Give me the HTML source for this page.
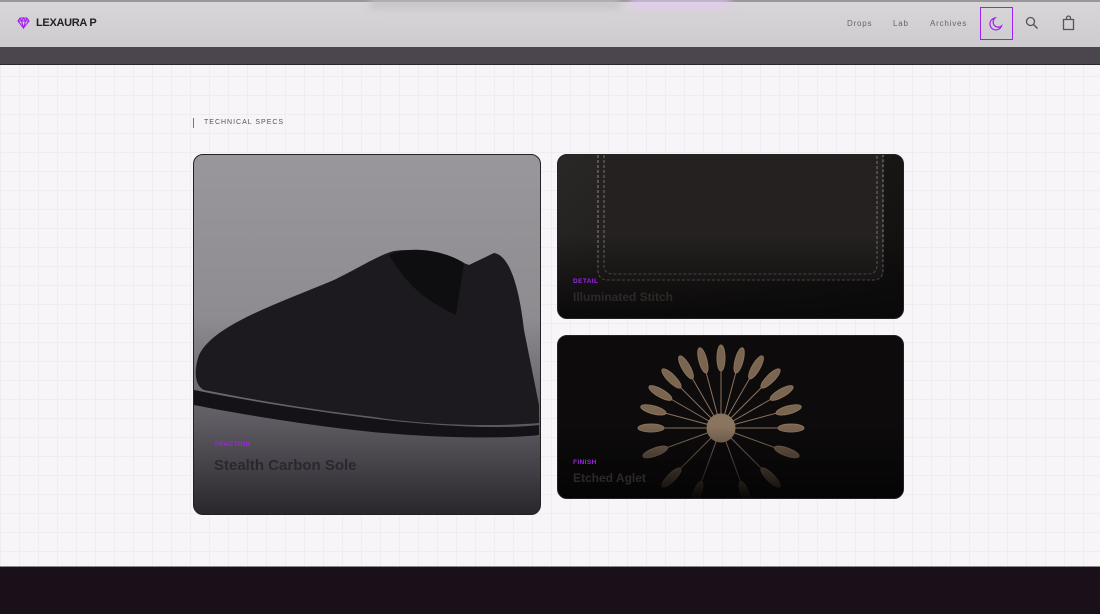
<!DOCTYPE html>
<html><head><meta charset="utf-8"><style>
*{margin:0;padding:0;box-sizing:border-box}
body{width:1100px;height:614px;overflow:hidden;background:#f8f5f9;font-family:"Liberation Sans",sans-serif;position:relative;
background-image:linear-gradient(#f1ebf2 1px,transparent 1px),linear-gradient(90deg,#f1ebf2 1px,transparent 1px);background-size:19px 19px}
.hdr{position:absolute;left:0;top:0;width:1100px;height:47px;background:linear-gradient(#d8d6d9,#cdcbce);border-top:2px solid #9a979b}
.band{position:absolute;left:0;top:47px;width:1100px;height:18px;background:#4b464d;border-bottom:1px solid #2a262b}
.logo{position:absolute;left:17px;top:17px;display:flex;align-items:center;gap:6px;font-size:11px;font-weight:bold;color:#222;letter-spacing:-.3px}
.nav{position:absolute;top:19px;font-size:8px;color:#666;letter-spacing:.8px}
.moon{position:absolute;left:980px;top:7px;width:33px;height:33px;border:1.5px solid #a020f0}
.lbl{position:absolute;left:193px;top:118px;border-left:1.5px solid #a34be0;padding-left:10px;font-size:7px;letter-spacing:1px;color:#555;height:10px;line-height:10px}
.card{position:absolute;border-radius:10px;overflow:hidden;border:1px solid #222}
.tag{position:absolute;font-size:6.5px;font-weight:bold;color:#a020f0;letter-spacing:.4px}
.ttl{position:absolute;font-weight:bold;color:#2a2730}
.foot{position:absolute;left:0;top:566px;width:1100px;height:48px;background:#1a1019;border-top:1px solid #888}
</style></head><body>
<div class="hdr"></div>
<div style="position:absolute;left:370px;top:0;width:250px;height:8px;background:#c3c1c4;filter:blur(4px)"></div>
<div style="position:absolute;left:630px;top:0;width:100px;height:8px;background:#e3c9ee;filter:blur(4px)"></div>
<div class="band"></div>
<div class="logo"><svg width="13" height="12" viewBox="0 0 13 12"><path d="M3 1h7l2 3-5.5 7L1 4z M1 4h11 M4.5 4l2 7 2-7 M3 1l1.5 3 2-3 2 3 1.5-3" fill="none" stroke="#a020f0" stroke-width="1.1"/></svg>LEXAURA P</div>
<div class="nav" style="left:847px">Drops</div>
<div class="nav" style="left:893px">Lab</div>
<div class="nav" style="left:930px">Archives</div>
<div class="moon"><svg width="30" height="30" viewBox="0 0 30 30"><path d="M14 10a6 6 0 1 0 6.5 8A5 5 0 0 1 14 10z" fill="none" stroke="#a020f0" stroke-width="1.2"/></svg></div>
<svg style="position:absolute;left:1025px;top:16px" width="14" height="14" viewBox="0 0 14 14"><circle cx="5.5" cy="5.5" r="4" fill="none" stroke="#555" stroke-width="1.3"/><path d="M8.5 8.5l4 4" stroke="#555" stroke-width="1.4"/></svg>
<svg style="position:absolute;left:1062px;top:15px" width="13" height="16" viewBox="0 0 13 16"><path d="M1.5 4.5h10v10h-10z M4.5 4.5V3a2 2 0 0 1 4 0v1.5" fill="none" stroke="#555" stroke-width="1.3"/></svg>
<div class="lbl">TECHNICAL SPECS</div>

<div class="card" style="left:193px;top:154px;width:348px;height:361px;background:linear-gradient(#99979c 0%,#8e8c91 45%,#5c5a60 75%,#29272c 100%)">
<svg width="348" height="361" viewBox="0 0 348 361" style="position:absolute;left:0;top:0">
<path d="M5 200 C20 170 80 150 140 125 C170 110 185 100 200 96 C225 92 250 100 275 110 L300 98 C315 100 325 130 330 175 L345 250 L345 268 C300 272 230 270 180 262 C120 255 60 245 10 235 C0 230 0 215 5 200 Z" fill="#1c1a1f"/>
<path d="M0 235 C60 247 130 258 200 266 C260 272 310 274 345 270 L345 280 C300 285 220 282 160 275 C100 268 40 258 0 250 Z" fill="#141216"/>
<path d="M195 100 C215 90 250 95 270 108 L262 160 C240 150 215 135 195 100Z" fill="#0e0d10"/>
</svg>
<div class="tag" style="left:20px;top:286px">TRACTION</div>
<div class="ttl" style="left:20px;top:302px;font-size:15px">Stealth Carbon Sole</div>
</div>

<div class="card" style="left:557px;top:154px;width:347px;height:165px;background:linear-gradient(135deg,#2a2826,#1a1817 60%,#0e0c0c)">
<svg width="347" height="165" style="position:absolute;left:0;top:0"><path d="M40 0 V115 Q40 125 50 125 H315 Q325 125 325 115 V0" fill="#242120" stroke="#8d8780" stroke-width="1" stroke-dasharray="3 2"/><path d="M46 0 V110 Q46 119 55 119 H310 Q319 119 319 110 V0" fill="none" stroke="#7a746d" stroke-width="1" stroke-dasharray="3 2"/></svg>
<div style="position:absolute;left:0;top:80px;width:347px;height:85px;background:linear-gradient(transparent,#0a0909)"></div>
<div class="tag" style="left:15px;top:123px">DETAIL</div>
<div class="ttl" style="left:15px;top:135px;font-size:12px;color:#2c2928">Illuminated Stitch</div>
</div>

<div class="card" style="left:557px;top:335px;width:347px;height:164px;background:#0d0b0c">
<svg width="347" height="164" style="position:absolute;left:0;top:0">
<g transform="translate(163 92)" stroke="#8a735c" fill="#7a6550">
<g id="p"><line x1="0" y1="0" x2="0" y2="-75" stroke-width="1"/><ellipse cx="0" cy="-70" rx="4" ry="13"/></g>
<use href="#p" transform="rotate(-90)"/><use href="#p" transform="rotate(-75)"/><use href="#p" transform="rotate(-60)"/><use href="#p" transform="rotate(-45)"/><use href="#p" transform="rotate(-30)"/><use href="#p" transform="rotate(-15)"/><use href="#p" transform="rotate(15)"/><use href="#p" transform="rotate(30)"/><use href="#p" transform="rotate(45)"/><use href="#p" transform="rotate(60)"/><use href="#p" transform="rotate(75)"/><use href="#p" transform="rotate(90)"/><use href="#p" transform="rotate(110)"/><use href="#p" transform="rotate(135)"/><use href="#p" transform="rotate(160)"/><use href="#p" transform="rotate(200)"/><use href="#p" transform="rotate(225)"/><use href="#p" transform="rotate(250)"/>
<circle r="14" fill="#8a7560"/></g></svg>
<div style="position:absolute;left:0;top:90px;width:347px;height:74px;background:linear-gradient(transparent,#050405)"></div>
<div class="tag" style="left:15px;top:123px">FINISH</div>
<div class="ttl" style="left:15px;top:135px;font-size:12px;color:#2c2928">Etched Aglet</div>
</div>
<div class="foot"></div>
</body></html>
